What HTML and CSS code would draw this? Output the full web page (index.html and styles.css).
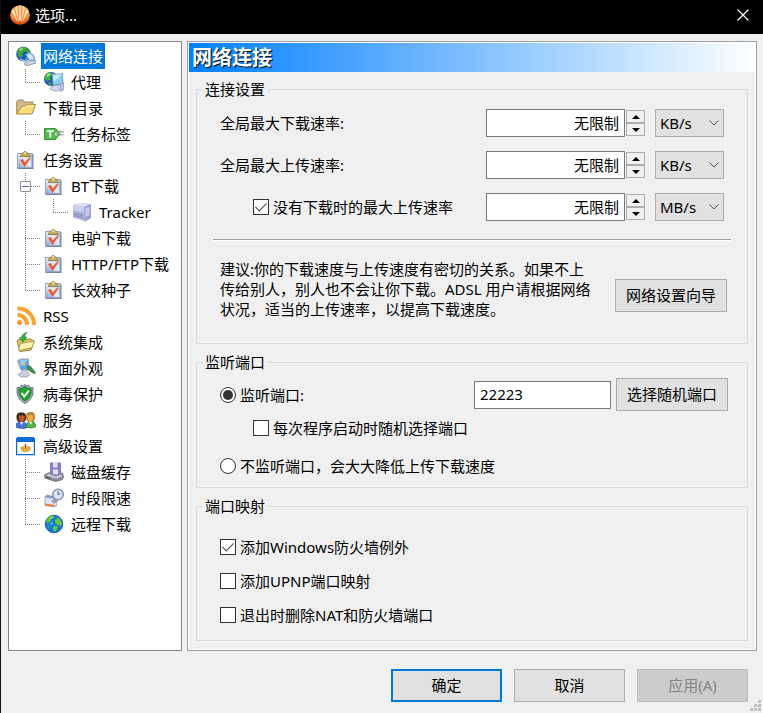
FILE: index.html
```html
<!DOCTYPE html>
<html lang="zh-CN">
<head>
  <meta charset="UTF-8">
  <meta name="viewport" content="width=device-width, initial-scale=1.0">
  <title>选项...</title>
  <link rel="stylesheet" href="styles.css">
</head>
<body>
  <!-- icons used more than once -->
  <svg class="sprite" aria-hidden="true">
    <linearGradient id="paper" x1="0" y1="1" x2="1" y2="0">
      <stop offset="0" stop-color="#8fa9d0"/>
      <stop offset=".5" stop-color="#e3ebf6"/>
      <stop offset="1" stop-color="#c6d3e8"/>
    </linearGradient>
    <symbol id="icon-task" viewBox="0 0 20 20">
      <path d="M1.500 4h16v15h-16z" fill="#7184a8"/>
      <path d="M1 3h15.500v15H1z" fill="#93a6c6"/>
      <path d="M2 4h13.500v13H2z" fill="url(#paper)"/>
      <path d="M4 6.500L6 3.500l2-1Q9-.5 10.500 2.500l2 1 2 3z" fill="#c9ae5c" stroke="#857038" stroke-width=".8"/>
      <circle cx="9.200" cy="3" r="1" fill="#fff3c0"/>
      <path d="M4 10l3-1 1.500 3.500L14 7l.5 1.500L8.500 17z" fill="#e85a36"/>
    </symbol>
    <symbol id="icon-chevron" viewBox="0 0 10 6">
      <path d="M.5.5L5 5 9.500.5" fill="none" stroke="#555"/>
    </symbol>
    <symbol id="icon-up" viewBox="0 0 8 4"><path d="M0 4L4 0l4 4z"/></symbol>
    <symbol id="icon-down" viewBox="0 0 8 4"><path d="M0 0h8L4 4z"/></symbol>
  </svg>

  <div class="window">
    <header class="titlebar">
      <svg class="icon" viewBox="0 0 20 20" aria-hidden="true">
        <linearGradient id="flame" x1="0" y1="0" x2="0" y2="1">
          <stop offset="0" stop-color="#fbb26a"/>
          <stop offset=".6" stop-color="#f8882c"/>
          <stop offset="1" stop-color="#d8450a"/>
        </linearGradient>
        <circle cx="10" cy="10" r="9.800" fill="url(#flame)"/>
        <path d="M10 .5l.7 15h-1.400zM6.500 1.500l2 15-3-13.500zM13.500 1.500l-2 15 3-13.500zM3.500 4l3.500 12-5-9.500zM16.500 4L13 16l5-9.500z" fill="#fff0d2" stroke="#fff0d2" stroke-width=".4"/>
      </svg>
      <span class="titlebar-text">选项...</span>
      <button class="close" type="button" aria-label="关闭">
        <svg viewBox="0 0 12 12"><path d="M.5.5l11 11M11.500.5l-11 11" stroke="#fff" stroke-width="1.200"/></svg>
      </button>
    </header>

    <div class="content">
      <nav class="tree">
        <ul>
          <li>
            <div class="row">
              <svg class="icon" viewBox="0 0 20 20">
                <circle cx="7.500" cy="8" r="7.300" fill="#1f55b8"/>
                <path d="M1 6Q3 0 9 1l2 2-2 3-3 1 1 3-3 2-2-2zM11 2l3 3-2 3-2-3z" fill="#3aa83a"/>
                <path d="M3.500 3l4-1.500L6 4 3.500 5z" fill="#b4e58c"/>
                <path d="M4 13l5 2 2-3" fill="none" stroke="#7fb0e4" stroke-width="1.500"/>
                <path d="M9.500 8.500L13 6.500l4.500 2.500 1.500 5-5 1.500z" fill="#a6c6ea" stroke="#7193bd" stroke-width=".8"/>
                <path d="M11 9l2.500-1 3 2 .5 3-3 .8z" fill="#d0e6fb"/>
                <path d="M8.500 17l4-2 6.500-.500 1 2.500-8 2.500-3-.5z" fill="#ccd7e6" stroke="#76869e" stroke-width=".8"/>
              </svg>
              <a class="selected" href="#">网络连接</a>
            </div>
            <ul>
              <li>
                <div class="row">
                  <svg class="icon" viewBox="0 0 20 20">
                    <circle cx="7" cy="7" r="7" fill="#2458b4"/>
                    <path d="M0 6Q2 0 8 .5L9 3 6 5l1 3-4 1zM4 10l4 1-2 3z" fill="#3fae40"/>
                    <path d="M3 2.500L6.500 1 6 3 3 5z" fill="#b4e58c"/>
                    <path d="M8 2l11-1 .5 12-10.500.500z" fill="#8ba5cc"/>
                    <path d="M9 3l9-.8.3 9.300-8.800.5z" fill="#85d1fa"/>
                    <path d="M9 3l9-.8-8.500 8z" fill="#c2edff"/>
                    <path d="M16.500 10.500l3-.5v8l-3 1.500z" fill="#b9bce0" stroke="#8f93bd" stroke-width=".6"/>
                    <path d="M11 13.500h4V16l1 2-4 1.500-6-2.500 1-2z" fill="#d5d7ec" stroke="#9194bb" stroke-width=".7"/>
                  </svg>
                  <a href="#">代理</a>
                </div>
              </li>
            </ul>
          </li>
          <li>
            <div class="row">
              <svg class="icon" viewBox="0 0 20 20">
                <path d="M.7 16V3.500l1.500-1.500h5l1.500 2H17v4" fill="#d3bb86" stroke="#9a8a66"/>
                <path d="M.8 16L5 9l3.500-.5L10 7l9.500-.5-3.500 9.500z" fill="#fbdc7c" stroke="#a98a3c" stroke-linejoin="round"/>
                <path d="M5.500 10l3.500-.5L10.500 8l7.500-.3" stroke="#fff5cc" fill="none"/>
              </svg>
              <a href="#">下载目录</a>
            </div>
            <ul>
              <li>
                <div class="row">
                  <svg class="icon" viewBox="0 0 20 20">
                    <path d="M.5 4.500h11L16 9.500l-4.500 6H.5z" fill="#52bd4c" stroke="#3b9a38"/>
                    <path d="M3 7.200h6.500M6.300 7.500v6" stroke="#fff" stroke-width="1.800" fill="none"/>
                    <circle cx="12.500" cy="10" r="1.500" fill="#e8f5e8"/>
                    <path d="M12.500 10c2-3 4-3 5-2h2.500M12.500 10c2 2 4 0 7 1" fill="none" stroke="#8b9099" stroke-width="1.200"/>
                  </svg>
                  <a href="#">任务标签</a>
                </div>
              </li>
            </ul>
          </li>
          <li>
            <div class="row">
              <svg class="icon"><use href="#icon-task"/></svg>
              <a href="#">任务设置</a>
            </div>
            <ul>
              <li>
                <div class="row expandable">
                  <button class="toggle" type="button" aria-label="折叠"></button>
                  <svg class="icon"><use href="#icon-task"/></svg>
                  <a href="#">BT下载</a>
                </div>
                <ul>
                  <li>
                    <div class="row">
                      <svg class="icon" viewBox="0 0 20 20">
                        <path d="M1 3l8-2 10 1v14l-6 3.500L9 18l-8-2.500z" fill="#b5b7e0"/>
                        <path d="M1 3l8-2 10 1-7 3z" fill="#dedff5"/>
                        <path d="M12 5l7-3v14l-6 3.500z" fill="#9fa1d2"/>
                        <path d="M13.500 6.500l4-1.500v8l-4 2z" fill="#c9cbec"/>
                        <path d="M1 3l11 2v5L1 8z" fill="#cdcfee"/>
                        <path d="M1 9.500l11 2v6L1 15z" fill="#a9abda"/>
                        <path d="M2 11.500l9 2M2 13.500l9 2" stroke="#8b8dc2"/>
                      </svg>
                      <a href="#">Tracker</a>
                    </div>
                  </li>
                </ul>
              </li>
              <li>
                <div class="row">
                  <svg class="icon"><use href="#icon-task"/></svg>
                  <a href="#">电驴下载</a>
                </div>
              </li>
              <li>
                <div class="row">
                  <svg class="icon"><use href="#icon-task"/></svg>
                  <a href="#">HTTP/FTP下载</a>
                </div>
              </li>
              <li>
                <div class="row">
                  <svg class="icon"><use href="#icon-task"/></svg>
                  <a href="#">长效种子</a>
                </div>
              </li>
            </ul>
          </li>
          <li>
            <div class="row">
              <svg class="icon" viewBox="0 0 20 20">
                <g fill="none" stroke="#fba02c" stroke-width="4">
                  <path d="M1.500 2.500A16 16 0 0 1 18 19"/>
                  <path d="M1.500 9A9.500 9.500 0 0 1 11 19"/>
                </g>
                <circle cx="3.500" cy="16.500" r="2.500" fill="#fb962a"/>
              </svg>
              <a href="#">RSS</a>
            </div>
          </li>
          <li>
            <div class="row">
              <svg class="icon" viewBox="0 0 20 20">
                <path d="M1 9l2-2 3 1 8-1 4 2-3 9-11 1.500z" fill="#dcc36a" stroke="#99803c"/>
                <path d="M2.500 18.500L4.500 11.500 18.500 9 15.500 16z" fill="#fdf3ac" stroke="#a68d3f" stroke-width=".8"/>
                <path d="M11 .5Q8.500 2.500 8.800 5l2.200 0L7 10 3.500 5.500l2 0Q6 1.500 11 .5z" fill="#35b23a" stroke="#1b7d24" stroke-width=".6"/>
              </svg>
              <a href="#">系统集成</a>
            </div>
          </li>
          <li>
            <div class="row">
              <svg class="icon" viewBox="0 0 20 20">
                <path d="M1 2.500L4.500.5h8.500v11l-4 2-5-2z" fill="#93a8cc"/>
                <path d="M4.500 2h7.500v9H5z" fill="#4fa6ee"/>
                <path d="M4.500 2H12L5 8z" fill="#9ad3fa"/>
                <path d="M7.500 3.500l1 1.500 2 .5-1.500 1-.5 2-1.500-1.500-2-.5 2-1z" fill="#efbd48"/>
                <path d="M6 12h5l1 2.500 2 2-3 2.500H4.500L2 16.500l3.500-2z" fill="#c9d0df" stroke="#8990a8" stroke-width=".7"/>
                <path d="M11 8.500l3-.5 5 6v1.500l-3-1-4-3z" fill="#419b42" stroke="#235f2e" stroke-width=".7"/>
              </svg>
              <a href="#">界面外观</a>
            </div>
          </li>
          <li>
            <div class="row">
              <svg class="icon" viewBox="0 0 20 20">
                <path d="M1 3.500h3L5.500 1 7 2l2-1.500L11 2l1.500-1L14 3.500h3V9q-1 7-8 10.500Q2 16 1 9z" fill="#a3abb6" stroke="#5f6874" stroke-width=".8"/>
                <path d="M3 5q4 0 6-2.500Q11 5 15 5v4q-1 5-6 8-5-3-6-8z" fill="#1fa631" stroke="#0c6b1b" stroke-width=".8"/>
                <path d="M5.500 9l2.700 3.500L13 6.500" stroke="#fff" stroke-width="2" fill="none"/>
              </svg>
              <a href="#">病毒保护</a>
            </div>
          </li>
          <li>
            <div class="row">
              <svg class="icon" viewBox="0 0 20 20">
                <path d="M.5 17.500v-4l3-2h4l3 2.500v4q-5 1-10-.5z" fill="#4a71dc" stroke="#26449a" stroke-width=".7"/>
                <path d="M10.500 17.500V14l2-2.500h5l2 3v2.500q-4 1.500-9 .5z" fill="#4fb33f" stroke="#2c7e2a" stroke-width=".7"/>
                <path d="M4 12l1.500 3L7.500 12zM13 12l1.500 3 2-3z" fill="#e9eef8"/>
                <rect x=".5" y="2.500" width="9.500" height="9.500" rx="4" fill="#3d2a20"/>
                <path d="M3 5.500h5.500q.8 5-2.500 7-3.500-1.500-3-7z" fill="#cc5526"/>
                <rect x="10" y="2" width="9" height="9.500" rx="4" fill="#b8893c"/>
                <path d="M11.500 5.500q3-1 5.500 0 .5 5-2.500 7-3-1.500-3-7z" fill="#f4ab4e"/>
              </svg>
              <a href="#">服务</a>
            </div>
          </li>
          <li>
            <div class="row">
              <svg class="icon" viewBox="0 0 20 20">
                <path d="M.6 2.600h17.800v16H.6z" fill="#fff" stroke="#0c6ad0" stroke-width="1.200"/>
                <path d="M0 2h1V1h17v1h1v4H0z" fill="#0c6ad0"/>
                <path d="M4 11.500q2-1.500 4.500-1.500v4l2 0v-4q4 0 4.500 2-1 4-5.500 4T4 11.500z" fill="#e6a532"/>
                <path d="M9.500 8v5.500" stroke="#8f6218" stroke-width="1.500"/>
              </svg>
              <a href="#">高级设置</a>
            </div>
            <ul>
              <li>
                <div class="row">
                  <svg class="icon" viewBox="0 0 20 20">
                    <path d="M.5 13l5-2.500 13 .5 1 4-1 2.500-7 2-10.500-3.500z" fill="#8f8f9a" stroke="#62626c" stroke-width=".8"/>
                    <path d="M2 13.300l4-1.800 11 1 1 2-6 2z" fill="#cdcdd4"/>
                    <path d="M6 .5h11v12l-5 2-6-2z" fill="#8482c4"/>
                    <path d="M9 .5h4.500v5H9zM9 7.500h5v5l-5-.5z" fill="#e2e2f2"/>
                    <path d="M2 15l4 1.500" stroke="#444"/>
                  </svg>
                  <a href="#">磁盘缓存</a>
                </div>
              </li>
              <li>
                <div class="row">
                  <svg class="icon" viewBox="0 0 20 20">
                    <path d="M1 8.500l2-1.500 11 3-2 8.500-11-1z" fill="#dfe5f1" stroke="#8f9bb5" stroke-width=".8"/>
                    <path d="M1 9.500l2-2.500 9 2.500v1.500z" fill="#8399c6"/>
                    <path d="M1.500 16.500l9 1.500" stroke="#e07a4c" stroke-width="1.800"/>
                    <path d="M7 13l4-2.500 3 2-4 3.500z" fill="#9aa3b5"/>
                    <circle cx="14" cy="6.500" r="5.300" fill="#d9e9fa" stroke="#8e949f" stroke-width="1.500"/>
                    <path d="M14 3v4l2.500-2" fill="none" stroke="#5a6a86"/>
                  </svg>
                  <a href="#">时段限速</a>
                </div>
              </li>
              <li>
                <div class="row">
                  <svg class="icon" viewBox="0 0 20 20">
                    <circle cx="10" cy="10" r="8.800" fill="#1478d8" stroke="#0c4f9e" stroke-width=".8"/>
                    <path d="M3 5Q6 1 10 2l0 2-3 1 0 2-3 2-2-1zM13 3l3 2 2 4-1 3-3-1-3-2 0-3 2-1zM9 12l4 0 1 2-3 4-2-2zM3 11l2 1 0 2z" fill="#62c63c"/>
                    <path d="M5 4.500q3-2 4.500-1.500L7 4.500z" fill="#cdf2a4"/>
                    <path d="M7 8q2 0 2 2l-3 1z" fill="#6fc4fa"/>
                  </svg>
                  <a href="#">远程下载</a>
                </div>
              </li>
            </ul>
          </li>
        </ul>
      </nav>

      <main class="panel">
        <h1>网络连接</h1>
        <div class="groups">
          <fieldset class="rates">
            <legend>连接设置</legend>
            <div class="rate-row">
              <label class="rate-label" for="maxDown">全局最大下载速率:</label>
              <input class="textbox rate" type="text" id="maxDown" value="无限制">
              <span class="spinner">
                <button type="button" aria-label="增加"><svg><use href="#icon-up"/></svg></button>
                <button type="button" aria-label="减少"><svg><use href="#icon-down"/></svg></button>
              </span>
              <span class="dropdown">
                <select aria-label="下载速率单位"><option>KB/s</option><option>MB/s</option></select>
                <svg><use href="#icon-chevron"/></svg>
              </span>
            </div>
            <div class="rate-row">
              <label class="rate-label" for="maxUp">全局最大上传速率:</label>
              <input class="textbox rate" type="text" id="maxUp" value="无限制">
              <span class="spinner">
                <button type="button" aria-label="增加"><svg><use href="#icon-up"/></svg></button>
                <button type="button" aria-label="减少"><svg><use href="#icon-down"/></svg></button>
              </span>
              <span class="dropdown">
                <select aria-label="上传速率单位"><option>KB/s</option><option>MB/s</option></select>
                <svg><use href="#icon-chevron"/></svg>
              </span>
            </div>
            <div class="rate-row">
              <label class="rate-label option indent"><input type="checkbox" checked>没有下载时的最大上传速率</label>
              <input class="textbox rate" type="text" aria-label="没有下载时的最大上传速率" value="无限制">
              <span class="spinner">
                <button type="button" aria-label="增加"><svg><use href="#icon-up"/></svg></button>
                <button type="button" aria-label="减少"><svg><use href="#icon-down"/></svg></button>
              </span>
              <span class="dropdown">
                <select aria-label="空闲上传速率单位"><option>KB/s</option><option selected>MB/s</option></select>
                <svg><use href="#icon-chevron"/></svg>
              </span>
            </div>
            <hr>
            <div class="advice">
              <p>建议:你的下载速度与上传速度有密切的关系。如果不上传给别人，别人也不会让你下载。ADSL 用户请根据网络状况，适当的上传速率，以提高下载速度。</p>
              <button class="button" type="button">网络设置向导</button>
            </div>
          </fieldset>

          <fieldset class="ports">
            <legend>监听端口</legend>
            <div class="port-row">
              <label class="option"><input type="radio" name="listen" checked>监听端口:</label>
              <input class="textbox port" type="text" aria-label="监听端口" value="22223">
              <button class="button" type="button">选择随机端口</button>
            </div>
            <label class="option indent random"><input type="checkbox">每次程序启动时随机选择端口</label>
            <label class="option"><input type="radio" name="listen">不监听端口，会大大降低上传下载速度</label>
          </fieldset>

          <fieldset class="mapping">
            <legend>端口映射</legend>
            <label class="option"><input type="checkbox" checked>添加Windows防火墙例外</label>
            <label class="option"><input type="checkbox">添加UPNP端口映射</label>
            <label class="option"><input type="checkbox">退出时删除NAT和防火墙端口</label>
          </fieldset>
        </div>
      </main>
    </div>

    <footer class="actions">
      <button class="button default" type="button">确定</button>
      <button class="button" type="button">取消</button>
      <button class="button" type="button" disabled>应用(A)</button>
      <svg class="grip" viewBox="0 0 11 11" aria-hidden="true">
        <path d="M8 0h3v3H8zM4 4h3v3H4zM8 4h3v3H8zM0 8h3v3H0zM4 8h3v3H4zM8 8h3v3H8z" fill="#bfbfbf"/>
      </svg>
    </footer>
  </div>
</body>
</html>
```

FILE: styles.css
```css
* {
  box-sizing: border-box;
}
body {
  margin: 0;
  background: #f0f0f0;
  color: #000;
  font-family: "Noto Sans", "Noto Sans CJK SC", sans-serif;
  font-size: 15px;
  line-height: 20px;
}
button, input, select {
  font: inherit;
  color: inherit;
  margin: 0;
}
svg {
  display: block;
}
.sprite {
  position: absolute;
  width: 0;
  height: 0;
}
.icon {
  width: 20px;
  height: 20px;
  flex: none;
}
.window {
  min-height: 100vh;
  border-left: 1px solid #111;
}

/* title bar */
.titlebar {
  display: flex;
  align-items: center;
  gap: 5px;
  height: 34px;
  padding: 0 14px 4px 9px;
  background: #000;
  color: #fff;
}
.titlebar-text {
  flex: 1;
}
.close {
  padding: 0;
  border: 0;
  background: none;
}
.close svg {
  width: 12px;
  height: 12px;
}

.content {
  display: flex;
  gap: 5px;
  padding: 7px 6px 0 7px;
}

/* category tree */
.tree {
  flex: none;
  width: 174px;
  padding: 1px 0 0 7px;
  border: 1px solid #828790;
  background: #fff;
}
.tree ul {
  margin: 0;
  padding: 0;
  list-style: none;
}
.tree li li {
  padding-left: 28px;
  background-image:
    repeating-linear-gradient(#808080 0 1px, transparent 1px 2px),
    repeating-linear-gradient(90deg, #808080 0 1px, transparent 1px 2px);
  background-size: 1px 100%, 15px 1px;
  background-position: 9px 0, 9px 13px;
  background-repeat: no-repeat;
}
.tree li li:last-child {
  background-size: 1px 13px, 15px 1px;
}
.row {
  display: flex;
  align-items: center;
  gap: 5px;
  height: 26px;
}
.row a {
  padding: 0 2px;
  line-height: 26px;
  color: #000;
  text-decoration: none;
  white-space: nowrap;
}
.row a.selected {
  background: #0078d7;
  color: #fff;
}
.expandable {
  margin-left: -24px;
}
.toggle {
  width: 11px;
  height: 11px;
  margin-right: 8px;
  padding: 0;
  border: 1px solid #919191;
  border-radius: 1px;
  background: linear-gradient(#4b63a7, #4b63a7) center / 7px 1px no-repeat #fff;
}

/* settings panel */
.panel {
  flex: 1;
  min-width: 0;
  border: 1px solid #a0a0a8;
  outline: 1px solid #fff;
  outline-offset: -2px;
  padding: 1px;
}
h1 {
  margin: 0;
  padding: 0 3px;
  background: linear-gradient(90deg, #0080ff, #fff);
  color: #fff;
  font-size: 20px;
  line-height: 29px;
  text-shadow: 1px 1px 1px #000;
}
.groups {
  display: flex;
  flex-direction: column;
  gap: 8px;
  padding: 7px 7px 8px;
}
fieldset {
  min-width: 0;
  margin: 0;
  padding: 0 23px;
  border: 1px solid #dcdcdc;
}
legend {
  margin-left: -17px;
  padding: 0 2px;
}
.option {
  display: flex;
  align-items: center;
  gap: 4px;
}
.indent {
  padding-left: 33px;
}
input[type="checkbox"], input[type="radio"] {
  appearance: none;
  display: grid;
  place-items: center;
  flex: none;
  width: 16px;
  height: 16px;
  border: 1px solid #333;
  background: #fff;
}
input[type="radio"] {
  border-radius: 50%;
}
input[type="checkbox"]:checked::before {
  content: "";
  width: 5px;
  height: 10px;
  margin-bottom: 4px;
  border: solid #444;
  border-width: 0 1px 1px 0;
  transform: rotate(45deg);
}
input[type="radio"]:checked::before {
  content: "";
  width: 10px;
  height: 10px;
  border-radius: 50%;
  background: #333;
}
.textbox {
  height: 28px;
  padding: 0 5px 2px;
  border: 1px solid #7a7a7a;
  background: #fff;
}
.button {
  flex: none;
  width: 112px;
  height: 33px;
  padding: 0 0 2px;
  border: 1px solid #adadad;
  background: #e1e1e1;
}

.rates {
  padding-top: 10px;
  padding-bottom: 24px;
}
.rate-row {
  display: flex;
  align-items: center;
  margin-bottom: 14px;
}
.rate-label {
  flex: 1;
}
.rate {
  width: 139px;
  text-align: right;
}
.spinner {
  display: grid;
  width: 19px;
  height: 26px;
  margin: 0 10px 0 1px;
}
.spinner button {
  display: grid;
  place-items: center;
  padding: 0;
  border: 1px solid #adadad;
  background: #f0f0f0;
}
.spinner svg {
  width: 8px;
  height: 4px;
}
.dropdown {
  display: grid;
  align-items: center;
  width: 69px;
}
.dropdown select, .dropdown svg {
  grid-area: 1 / 1;
}
.dropdown select {
  appearance: none;
  height: 28px;
  padding: 0 4px;
  border: 1px solid #adadad;
  border-radius: 0;
  background: #e1e1e1;
}
.dropdown svg {
  justify-self: end;
  width: 10px;
  height: 6px;
  margin-right: 5px;
  pointer-events: none;
}
hr {
  margin: 18px -7px;
  border: 0;
  border-top: 1px solid #a0a0a0;
  border-bottom: 1px solid #fff;
}
.advice {
  display: flex;
  align-items: flex-start;
  gap: 18px;
  margin-right: -3px;
}
.advice p {
  flex: 1;
  margin: 0;
}
.advice .button {
  margin-top: 20px;
}

.ports {
  padding-top: 6px;
  padding-bottom: 11px;
}
.port-row {
  display: flex;
  align-items: center;
  gap: 5px;
  margin-right: -4px;
}
.port-row .option {
  flex: 1;
}
.port {
  width: 137px;
}
.random {
  margin: 7px 0 18px;
}

.mapping {
  padding-top: 21px;
  padding-bottom: 15px;
}
.mapping .option + .option {
  margin-top: 14px;
}

/* bottom buttons */
.actions {
  position: relative;
  display: flex;
  justify-content: flex-end;
  gap: 12px;
  padding: 18px 15px 11px;
}
.actions .button {
  width: 111px;
}
.button.default {
  border: 2px solid #0078d7;
}
.button:disabled {
  border-color: #bfbfbf;
  background: #ccc;
  color: #838383;
}
.grip {
  position: absolute;
  right: 2px;
  bottom: 2px;
  width: 11px;
  height: 11px;
}
```
